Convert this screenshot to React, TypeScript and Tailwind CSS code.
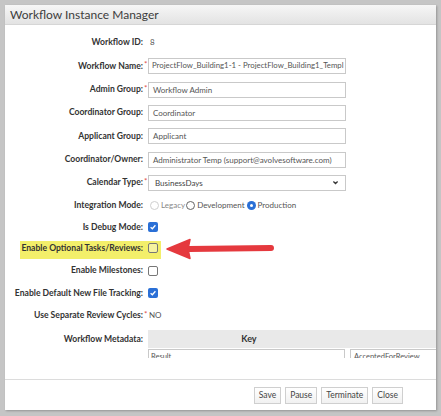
import React from 'react';

const font = { fontFamily: 'Lato, "Liberation Sans", sans-serif' };

function Label({ text, req }: { text: string; req?: boolean }) {
  return (
    <>
      <div className="w-[138px] shrink-0 text-right text-[8.6px] font-bold text-[#333] whitespace-nowrap">{text}</div>
      <div className="w-[5px] shrink-0 text-[8px] text-[#e04b4b] leading-none self-start mt-[6px] pl-[1px]">{req ? '*' : ''}</div>
    </>
  );
}

function TextBox({ value }: { value: string }) {
  return (
    <div className="w-[198px] h-[16px] border border-[#c9c9c9] bg-white px-[4px] flex items-center text-[8px] text-[#555] overflow-hidden whitespace-nowrap">
      {value}
    </div>
  );
}

function Check({ on, tint }: { on?: boolean; tint?: boolean }) {
  if (on)
    return (
      <div className="w-[10px] h-[10px] rounded-[2px] bg-[#2a6fd6] flex items-center justify-center">
        <svg viewBox="0 0 10 10" className="w-[8px] h-[8px]">
          <path d="M2 5.2 L4.2 7.2 L8 2.8" fill="none" stroke="white" strokeWidth="1.6" />
        </svg>
      </div>
    );
  return <div className={`w-[10px] h-[10px] rounded-[2px] border border-[#777] ${tint ? 'bg-[#f6f3a0]' : 'bg-white'}`} />;
}

function Radio({ on, disabled }: { on?: boolean; disabled?: boolean }) {
  if (on)
    return (
      <div className="w-[9px] h-[9px] rounded-full bg-[#2a6fd6] flex items-center justify-center">
        <div className="w-[3px] h-[3px] rounded-full bg-white" />
      </div>
    );
  return <div className={`w-[9px] h-[9px] rounded-full border ${disabled ? 'border-[#cfcfcf]' : 'border-[#666]'} bg-white`} />;
}

function Btn({ text }: { text: string }) {
  return (
    <div className="h-[17px] px-[4px] border border-[#cfcfcf] bg-gradient-to-b from-white to-[#f1f1f1] flex items-center text-[8.5px] text-[#444]">
      {text}
    </div>
  );
}

export default function App() {
  return (
    <div className="w-[441px] h-[416px] bg-[#c5c5c5] pt-[5px] pl-[5px] overflow-hidden" style={font}>
      <div className="w-[431px] h-[405px] bg-white flex flex-col overflow-hidden shadow-[1px_1px_2px_rgba(0,0,0,0.25)]">
        <div className="h-[20px] shrink-0 bg-gradient-to-b from-[#f6f6f6] to-[#e3e3e3] border-b border-[#d6d6d6] flex items-center pl-[5px] text-[12px] text-[#3d3d3d]">
          Workflow Instance Manager
        </div>

        <div className="h-[354px] shrink-0 pt-[5px] overflow-hidden">
          <div className="h-[24px] flex items-center">
            <Label text="Workflow ID:" />
            <div className="text-[8px] text-[#555] pl-[2px]">8</div>
          </div>
          <div className="h-[24px] flex items-center">
            <Label text="Workflow Name:" req />
            <div className="w-[198px] h-[16px] border border-[#c9c9c9] bg-white px-[3px] flex items-center text-[7.8px] text-[#555] overflow-hidden whitespace-nowrap">
              ProjectFlow_Building1-1 - ProjectFlow_Building1_Templ
            </div>
          </div>
          <div className="h-[23px] flex items-center">
            <Label text="Admin Group:" req />
            <TextBox value="Workflow Admin" />
          </div>
          <div className="h-[23px] flex items-center">
            <Label text="Coordinator Group:" />
            <TextBox value="Coordinator" />
          </div>
          <div className="h-[24px] flex items-center">
            <Label text="Applicant Group:" />
            <TextBox value="Applicant" />
          </div>
          <div className="h-[23px] flex items-center">
            <Label text="Coordinator/Owner:" />
            <TextBox value="Administrator Temp (support@avolvesoftware.com)" />
          </div>
          <div className="h-[23px] flex items-center">
            <Label text="Calendar Type:" req />
            <div className="w-[198px] h-[16px] border border-[#c9c9c9] bg-white pl-[6px] pr-[6px] flex items-center justify-between text-[8px] text-[#444]">
              <span>BusinessDays</span>
              <svg viewBox="0 0 10 10" className="w-[7px] h-[7px]">
                <path d="M2 3.5 L5 6.5 L8 3.5" fill="none" stroke="#333" strokeWidth="1.8" />
              </svg>
            </div>
          </div>
          <div className="h-[22px] flex items-center">
            <Label text="Integration Mode:" />
            <div className="flex items-center text-[8px] text-[#555] pl-[2px]">
              <Radio disabled />
              <span className="ml-[2px] text-[#888]">Legacy</span>
              <span className="ml-[1px]"><Radio /></span>
              <span className="ml-[2px]">Development</span>
              <span className="ml-[2px]"><Radio on /></span>
              <span className="ml-[2px]">Production</span>
            </div>
          </div>
          <div className="h-[22px] flex items-center">
            <Label text="Is Debug Mode:" />
            <Check on />
          </div>
          <div className="relative h-[21px] flex items-center">
            <div className="absolute left-[15px] top-[3px] w-[141px] h-[18px] bg-[#f3ef6a]" />
            <div className="relative flex items-center">
              <Label text="Enable Optional Tasks/Reviews:" />
              <Check tint />
            </div>
            <svg viewBox="0 0 115 22" className="absolute left-[158px] top-[0px] w-[115px] h-[22px]">
              <path d="M26 11 L108 10" stroke="#e5393e" strokeWidth="6" strokeLinecap="round" />
              <path d="M4 11 L27 1.5 L25 11 L27 20.5 Z" fill="#e5393e" stroke="#e5393e" strokeWidth="1.5" strokeLinejoin="round" />
            </svg>
          </div>
          <div className="h-[23px] flex items-center">
            <Label text="Enable Milestones:" />
            <Check />
          </div>
          <div className="h-[22px] flex items-center">
            <Label text="Enable Default New File Tracking:" />
            <Check on />
          </div>
          <div className="h-[22px] flex items-center">
            <Label text="Use Separate Review Cycles:" req />
            <div className="text-[8px] text-[#555] pl-[1px]">NO</div>
          </div>
          <div className="flex pt-[4px]">
            <div className="h-[18px] flex items-center">
              <Label text="Workflow Metadata:" />
            </div>
            <div className="w-[290px] shrink-0">
              <div className="h-[18px] bg-[#e9e9e9] flex items-center">
                <div className="w-[202px] text-center text-[9px] font-bold text-[#333]">Key</div>
              </div>
              <div className="flex gap-[5px] pt-[1px] h-[10px] overflow-hidden">
                <div className="w-[197px] h-[16px] shrink-0 border border-[#c9c9c9] px-[2px] text-[7.5px] text-[#555] leading-[13px]">Result</div>
                <div className="w-[100px] h-[16px] shrink-0 border border-[#c9c9c9] px-[3px] text-[7.5px] text-[#555] leading-[13px] whitespace-nowrap">AcceptedForReview</div>
              </div>
            </div>
          </div>
        </div>

        <div className="flex-1 border-t border-[#dcdcdc] flex justify-end items-start pt-[7px] pr-[33px] gap-[4px]">
          <Btn text="Save" />
          <Btn text="Pause" />
          <Btn text="Terminate" />
          <Btn text="Close" />
        </div>
      </div>
    </div>
  );
}
